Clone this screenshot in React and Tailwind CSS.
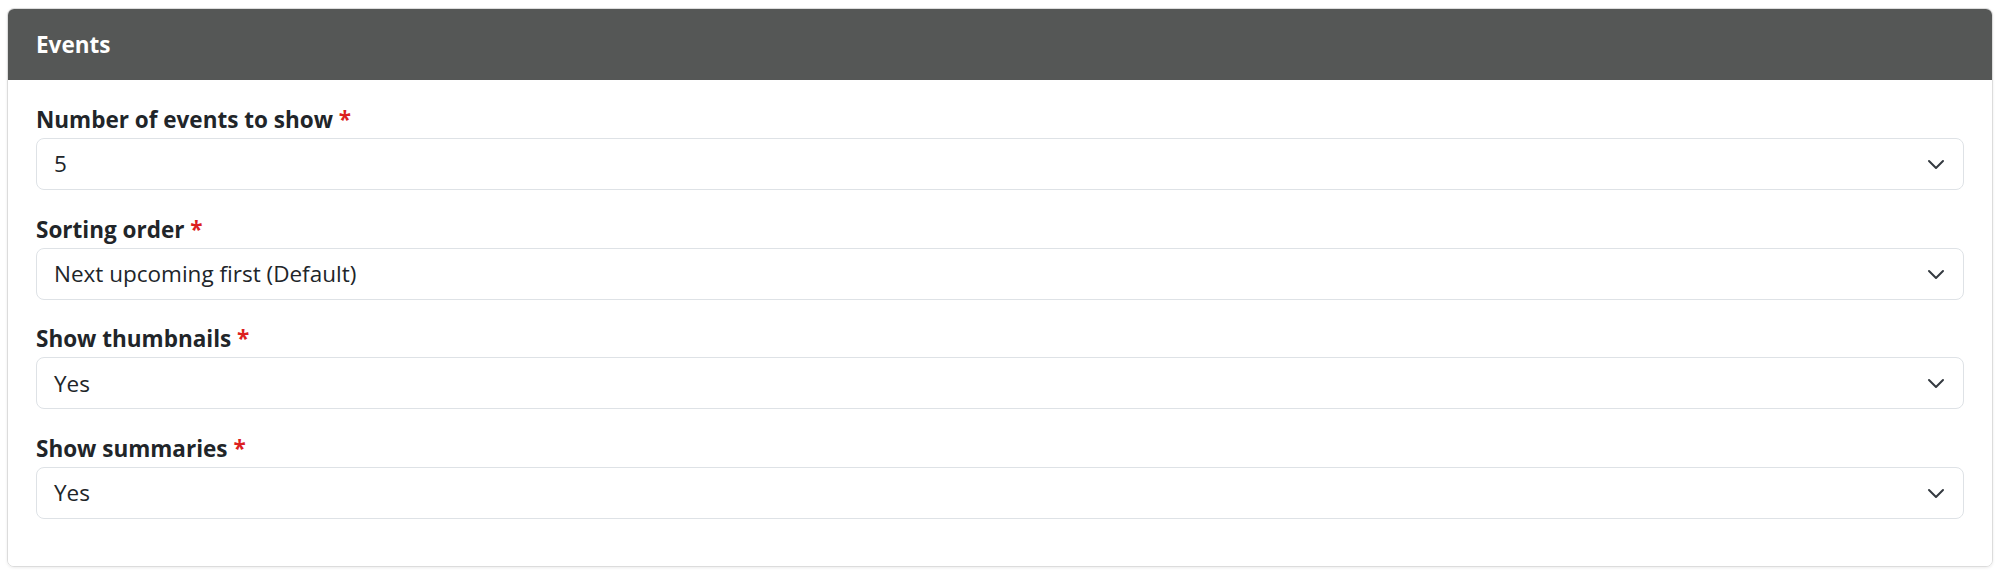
import React from "react";

const fields = [
  { label: "Number of events to show", value: "5" },
  { label: "Sorting order", value: "Next upcoming first (Default)" },
  { label: "Show thumbnails", value: "Yes" },
  { label: "Show summaries", value: "Yes" },
];

const Chevron = () => (
  <svg width="18" height="18" viewBox="0 0 18 18" fill="none" className="shrink-0">
    <path d="M2 6l7 7 7-7" stroke="#343a40" strokeWidth="2" strokeLinecap="round" strokeLinejoin="round" />
  </svg>
);

const App = () => {
  return (
    <div className="min-h-screen bg-white px-[7px] pt-[8px] font-['Open_Sans',sans-serif]">
      <div className="border border-[#dcdcdc] rounded-[7px] shadow-[0_1px_3px_rgba(0,0,0,0.08)] overflow-hidden">
        {/* Header */}
        <div className="bg-[#555756] h-[71px] flex items-center px-[28px]">
          <h2 className="text-white font-bold text-[22.5px]">Events</h2>
        </div>

        {/* Body */}
        <div className="bg-white px-[28px] pt-[23px] pb-[24px]">
          {fields.map((f, i) => (
            <div key={i} className="mb-[22.7px]">
              <label className="block text-[22.5px] leading-[34px] font-bold text-[#212529] mb-[1px]">
                {f.label} <span className="text-[#dc1f1f]">*</span>
              </label>
              <div className="h-[52px] border border-[#dee2e6] rounded-[8px] flex items-center justify-between pl-[17px] pr-[18px] text-[22.5px] text-[#212529]">
                <span>{f.value}</span>
                <Chevron />
              </div>
            </div>
          ))}
        </div>
      </div>
    </div>
  );
};

export default App;
